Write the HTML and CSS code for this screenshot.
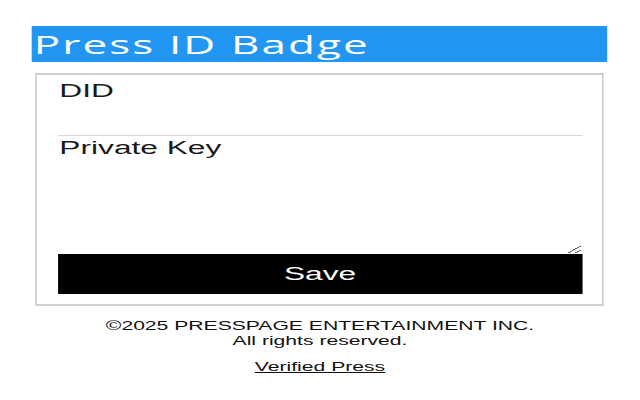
FILE: index.html
```html
<!DOCTYPE html>
<html lang="en">
<head>
<meta charset="utf-8">
<title>Press ID Badge</title>
<link rel="stylesheet" href="styles.css">
</head>
<body>
<div class="popup">
  <div class="container">
    <h1 class="header">Press ID Badge</h1>
    <form class="card">
      <input class="did" type="text" placeholder="DID">
      <textarea class="key" placeholder="Private Key"></textarea>
      <button class="save" type="button">Save</button>
    </form>
    <footer class="footer">
      <p>©2025 PRESSPAGE ENTERTAINMENT INC.<br>All rights reserved.</p>
      <p class="links"><a href="#">Verified Press</a></p>
    </footer>
  </div>
</div>
</body>
</html>
```

FILE: styles.css
```css
html, body {
  margin: 0;
  padding: 0;
  background: #fff;
  overflow: hidden;
}

.popup {
  width: 363.64px;
  padding-top: 26px;
  transform: scaleX(1.76);
  transform-origin: 0 0;
  font-family: "Liberation Sans", Arial, sans-serif;
  color: #222;
}

.container {
  width: 90%;
  margin: 0 auto;
}

.header {
  margin: 0;
  height: 36px;
  padding-left: 1px;
  background: #2196f3;
  color: #fff;
  font-family: "Open Sans", "Noto Sans", sans-serif;
  font-weight: 500;
  font-size: 25px;
  letter-spacing: 1.2px;
  line-height: 37px;
  white-space: nowrap;
  overflow: hidden;
}

.card {
  margin: 11px 2px 0;
  border-style: solid;
  border-color: #cfcfcf;
  border-width: 2px 1.14px;
  padding: 0 11.4px 10px;
}

.did {
  display: block;
  width: 100%;
  box-sizing: border-box;
  margin: 0;
  border: 0;
  border-bottom: 1px solid #d8d8d8;
  padding: 5.5px 1.14px 33.5px;
  font-family: "Liberation Sans", Arial, sans-serif;
  font-size: 18px;
  line-height: 21px;
  color: #1a1a1a;
  background: #fff;
  outline: none;
}

.did::placeholder {
  color: #1a1a1a;
  opacity: 1;
}

.key {
  display: block;
  width: 100%;
  height: 118px;
  box-sizing: border-box;
  margin: 0;
  border: 0;
  padding: 2px 1.14px;
  font-family: "Liberation Sans", Arial, sans-serif;
  font-size: 18px;
  color: #1a1a1a;
  background: #fff;
  outline: none;
  resize: vertical;
}

.key::placeholder {
  color: #1a1a1a;
  opacity: 1;
}

.save {
  display: block;
  width: 100%;
  height: 40px;
  margin: 0;
  border: 0;
  padding: 0;
  background: #000;
  color: #fff;
  font-family: "Liberation Sans", Arial, sans-serif;
  font-size: 18px;
}

.footer {
  margin-top: 13px;
  text-align: center;
  font-size: 12px;
  line-height: 15px;
  color: #111;
}

.footer p {
  margin: 0;
}

.footer .links {
  margin-top: 11px;
}

.footer a {
  color: #111;
  text-decoration: underline;
}
```
